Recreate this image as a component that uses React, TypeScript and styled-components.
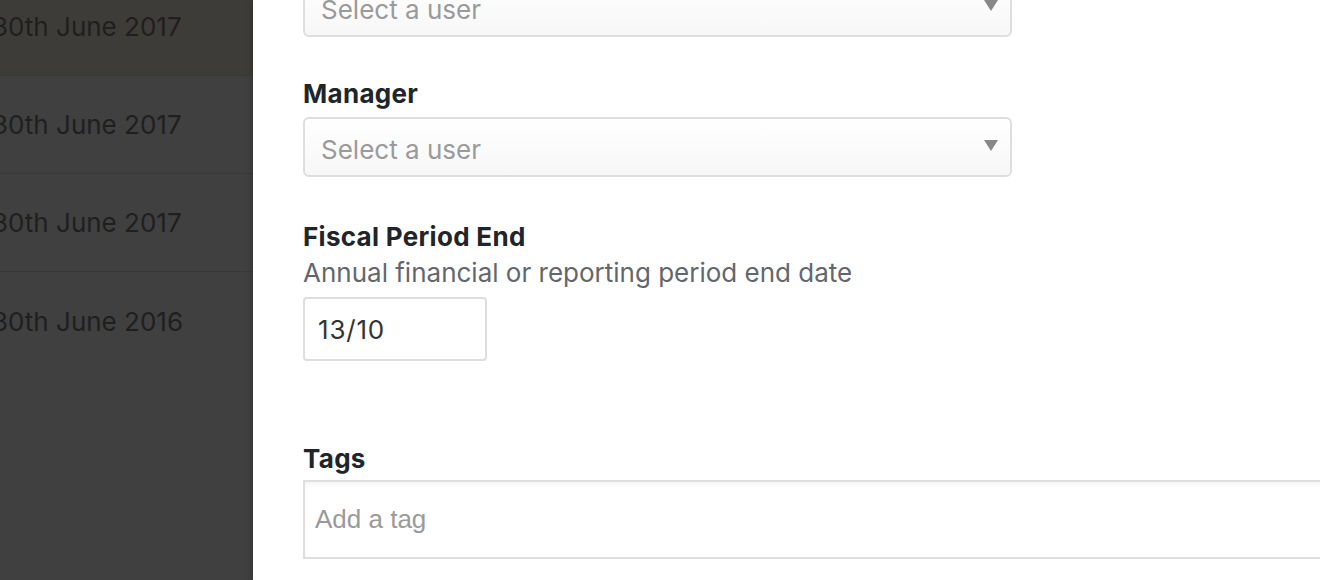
import React from "react";
import styled, { createGlobalStyle } from "styled-components";

const GlobalStyle = createGlobalStyle`
  html, body {
    margin: 0;
    padding: 0;
    width: 1320px;
    height: 580px;
    overflow: hidden;
    background: #ffffff;
  }
  * { box-sizing: border-box; }
`;

const Page = styled.div`
  display: flex;
  width: 1320px;
  height: 580px;
  overflow: hidden;
  font-family: Inter, "Liberation Sans", sans-serif;
`;

const Backdrop = styled.div`
  width: 253px;
  flex: none;
  height: 100%;
  background: #404040;
  overflow: hidden;
`;

const List = styled.div`
  display: flex;
  flex-direction: column;
  margin-top: -22px;
`;

const Row = styled.div<{ $highlight?: boolean; $last?: boolean }>`
  height: 98px;
  display: flex;
  align-items: center;
  background: ${(p) => (p.$highlight ? "#3e3c38" : "transparent")};
  border-bottom: ${(p) => (p.$last ? "none" : "1px solid #393939")};
`;

const RowText = styled.span`
  margin-left: -8px;
  font-size: 26px;
  color: #1f1f1f;
  white-space: nowrap;
`;

const Drawer = styled.div`
  flex: 1;
  height: 100%;
  background: #ffffff;
  padding-left: 50px;
  box-shadow: -2px 0 5px rgba(0, 0, 0, 0.18);
  position: relative;
`;

const Form = styled.div`
  display: flex;
  flex-direction: column;
  margin-top: -23px;
`;

const Field = styled.div<{ $gap: number }>`
  display: flex;
  flex-direction: column;
  margin-bottom: ${(p) => p.$gap}px;
`;

const Label = styled.div<{ $mb?: number }>`
  font-size: 26px;
  font-weight: 700;
  letter-spacing: 0.3px;
  line-height: 30px;
  color: #212529;
  margin-bottom: ${(p) => (p.$mb ?? 8)}px;
`;

const Help = styled.div`
  font-size: 26px;
  line-height: 30px;
  color: #63676d;
  margin-bottom: 9px;
`;

const Select = styled.div`
  width: 709px;
  height: 60px;
  border: 2px solid #dedede;
  border-radius: 6px;
  background: linear-gradient(#ffffff, #f7f7f7);
  display: flex;
  align-items: center;
  justify-content: space-between;
  padding: 0 12px 0 16px;
`;

const Placeholder = styled.span`
  font-size: 26px;
  color: #9a9a9a;
  padding-top: 4px;
`;

const Arrow = styled.span`
  width: 0;
  height: 0;
  border-left: 7px solid transparent;
  border-right: 7px solid transparent;
  border-top: 11px solid #888888;
  margin-bottom: 4px;
`;

const DateInput = styled.div`
  width: 184px;
  height: 64px;
  border: 2px solid #dedede;
  border-radius: 4px;
  display: flex;
  align-items: center;
  padding-left: 13px;
  font-size: 26px;
  letter-spacing: 0.8px;
  color: #333333;
`;

const TagInput = styled.div`
  width: 1100px;
  height: 79px;
  border: 2px solid #dedede;
  box-shadow: inset 0 3px 5px rgba(0, 0, 0, 0.04);
  display: flex;
  align-items: center;
  padding-left: 10px;
  font-family: "Liberation Sans", Arial, sans-serif;
  font-size: 26px;
  color: #9a9a9a;
`;

const rows = [
  "30th June 2017",
  "30th June 2017",
  "30th June 2017",
  "30th June 2016",
];

export default function App() {
  return (
    <>
      <GlobalStyle />
      <Page>
        <Backdrop>
          <List>
            {rows.map((r, i) => (
              <Row key={i} $highlight={i === 0} $last={i === rows.length - 1}>
                <RowText>{r}</RowText>
              </Row>
            ))}
          </List>
        </Backdrop>
        <Drawer>
          <Form>
            <Field $gap={42}>
              <Select>
                <Placeholder>Select a user</Placeholder>
                <Arrow />
              </Select>
            </Field>
            <Field $gap={45}>
              <Label $mb={8}>Manager</Label>
              <Select>
                <Placeholder>Select a user</Placeholder>
                <Arrow />
              </Select>
            </Field>
            <Field $gap={83}>
              <Label $mb={6}>Fiscal Period End</Label>
              <Help>Annual financial or reporting period end date</Help>
              <DateInput>13/10</DateInput>
            </Field>
            <Field $gap={0}>
              <Label $mb={6}>Tags</Label>
              <TagInput>Add a tag</TagInput>
            </Field>
          </Form>
        </Drawer>
      </Page>
    </>
  );
}
